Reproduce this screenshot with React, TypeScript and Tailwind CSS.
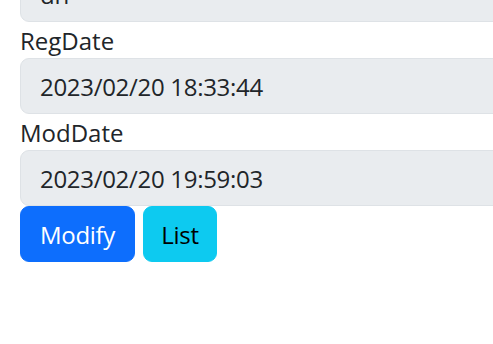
const fields = [
  { label: "", value: "dh" },
  { label: "RegDate", value: "2023/02/20 18:33:44" },
  { label: "ModDate", value: "2023/02/20 19:59:03" },
];

const ReadonlyInput = ({ value }: { value: string }) => (
  <div className="h-[56px] w-[640px] flex items-center pl-[19px] pt-[2px] bg-[#e9ecef] border border-[#dee2e6] rounded-[9px] text-[24px] text-[#212529] tracking-[-0.3px]">
    {value}
  </div>
);

export default function App() {
  return (
    <div className="h-[344px] w-[493px] overflow-hidden bg-white font-['Open_Sans',sans-serif]">
      <div className="-mt-[34px] pl-[20px] flex flex-col">
        {fields.map((f, i) => (
          <div key={i} className="flex flex-col">
            {f.label && (
              <label className="h-[36px] pt-[2px] text-[24px] leading-[34px] text-[#212529]">
                {f.label}
              </label>
            )}
            <ReadonlyInput value={f.value} />
          </div>
        ))}
        <div className="flex gap-[8px]">
          <button className="h-[56px] w-[115px] pt-[2px] rounded-[9px] bg-[#0d6efd] border border-[#0d6efd] text-white text-[24px] tracking-[-0.3px]">
            Modify
          </button>
          <button className="h-[56px] w-[74px] pt-[2px] rounded-[9px] bg-[#0dcaf0] border border-[#0dcaf0] text-black text-[24px] tracking-[-0.3px]">
            List
          </button>
        </div>
      </div>
    </div>
  );
}
